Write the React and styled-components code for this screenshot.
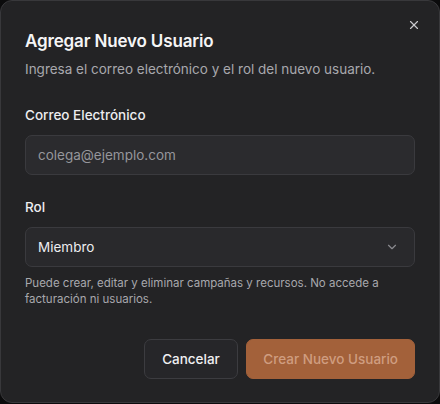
import React, {useState} from 'react';
import styled, {createGlobalStyle} from "styled-components"

const GlobalStyle = createGlobalStyle`
  html, body {
    margin: 0;
    padding: 0;
    background: #0b0b0c;
  }
  body {
    font-family: Inter, "Noto Sans", sans-serif;
  }
  * { box-sizing: border-box; }
`

const Dialog = styled.div`
  position: relative;
  width: 440px;
  height: 403px;
  background: #232325;
  border: 1px solid #38383b;
  border-radius: 12px;
  padding: 28px 24px 23px 24px;
  display: flex;
  flex-direction: column;
  color: #f2f2f3;
`
const CloseButton = styled.button`
  position: absolute;
  top: 16px;
  right: 17px;
  width: 16px;
  height: 16px;
  padding: 0;
  border: none;
  background: none;
  color: #c8c8cc;
  display: flex;
  align-items: center;
  justify-content: center;
`
const Title = styled.h2`
  margin: 0;
  font-size: 17px;
  font-weight: 600;
  line-height: 24px;
  letter-spacing: -0.15px;
  color: #f5f5f6;
`
const Description = styled.p`
  margin: 6px 0 0 0;
  font-size: 13.5px;
  line-height: 20px;
  color: #a8a8ad;
`
const Field = styled.div`
  display: flex;
  flex-direction: column;
  margin-top: ${p => p.$top}px;
`
const Label = styled.label`
  font-size: 13.5px;
  font-weight: 500;
  line-height: 20px;
  color: #ededf0;
`
const Input = styled.input`
  margin-top: 10px;
  height: 40px;
  width: 100%;
  background: #2b2b2e;
  border: 1px solid #3a3a3e;
  border-radius: 7px;
  padding: 0 12px;
  font-family: inherit;
  font-size: 13.5px;
  color: #ededf0;
  outline: none;
  &::placeholder { color: #96969b; }
`
const Select = styled.div`
  margin-top: 10px;
  height: 40px;
  background: #29292c;
  border: 1px solid #3a3a3e;
  border-radius: 7px;
  padding: 0 15px 0 12px;
  display: flex;
  align-items: center;
  justify-content: space-between;
  font-size: 13.5px;
  color: #ededf0;
`
const Hint = styled.p`
  margin: 8px 0 0 0;
  font-size: 11.5px;
  line-height: 16px;
  color: #a8a8ad;
`
const Footer = styled.div`
  margin-top: auto;
  display: flex;
  justify-content: flex-end;
  gap: 8px;
`
const Button = styled.button`
  height: 40px;
  padding: 0 ${p => p.$primary ? 16 : 17.5}px;
  border-radius: 7px;
  font-family: inherit;
  font-size: 13.5px;
  font-weight: 500;
  border: 1px solid ${p => p.$primary ? "#a3613a" : "#3c3c40"};
  background: ${p => p.$primary ? "#a3613a" : "#262629"};
  color: ${p => p.$primary ? "#cf9d80" : "#f0f0f2"};
`

const App = () => {
    const [email, setEmail] = useState("")
    return (
        <>
            <GlobalStyle/>
            <Dialog>
                <CloseButton>
                    <svg width="14" height="14" viewBox="0 0 24 24" fill="none" stroke="currentColor" strokeWidth="2" strokeLinecap="round">
                        <path d="M18 6 6 18"/>
                        <path d="m6 6 12 12"/>
                    </svg>
                </CloseButton>
                <Title>Agregar Nuevo Usuario</Title>
                <Description>Ingresa el correo electrónico y el rol del nuevo usuario.</Description>
                <Field $top={26}>
                    <Label>Correo Electrónico</Label>
                    <Input placeholder="colega@ejemplo.com" value={email} onChange={e => setEmail(e.target.value)}/>
                </Field>
                <Field $top={22}>
                    <Label>Rol</Label>
                    <Select>
                        <span>Miembro</span>
                        <svg width="14" height="14" viewBox="0 0 24 24" fill="none" stroke="#8a8a8f" strokeWidth="2" strokeLinecap="round" strokeLinejoin="round">
                            <path d="m6 9 6 6 6-6"/>
                        </svg>
                    </Select>
                    <Hint>Puede crear, editar y eliminar campañas y recursos. No accede a facturación ni usuarios.</Hint>
                </Field>
                <Footer>
                    <Button>Cancelar</Button>
                    <Button $primary>Crear Nuevo Usuario</Button>
                </Footer>
            </Dialog>
        </>
    );
};

export default App;
